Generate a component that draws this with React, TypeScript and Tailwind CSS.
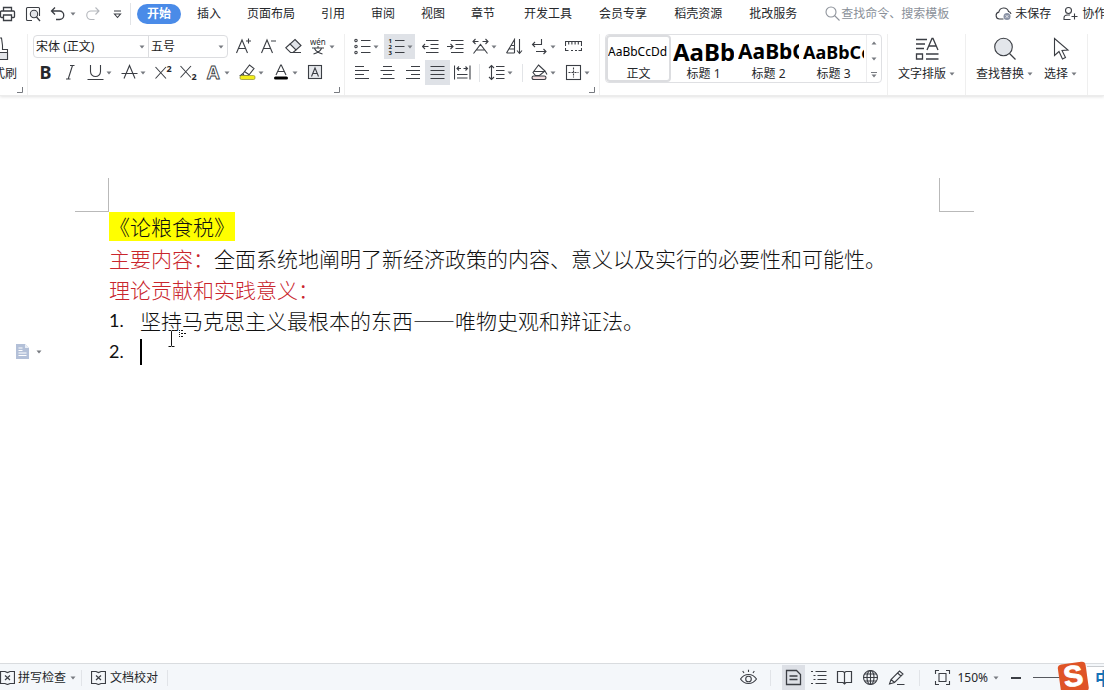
import React from "react";

const UI_FONT = "font-['Noto_Sans','Noto_Sans_CJK_SC',sans-serif]";
const DOC_FONT = "font-['Noto_Sans_CJK_SC',sans-serif]";

const coreTabs = ["插入", "页面布局", "引用", "审阅", "视图", "章节"];
const extraTabs = ["开发工具", "会员专享", "稻壳资源", "批改服务"];

const textStyles = [
  { label: "正文", sample: "AaBbCcDd", className: "text-[12px]" },
  { label: "标题 1", sample: "AaBb", className: "text-[24px] font-bold" },
  { label: "标题 2", sample: "AaBbC", className: "text-[21px] font-bold" },
  { label: "标题 3", sample: "AaBbCc", className: "text-[18px] font-bold" },
];

interface IconProps {
  size?: number;
  children: React.ReactNode;
}

const Icon: React.FC<IconProps> = ({ size = 17, children }) => (
  <svg
    width={size}
    height={size}
    viewBox={`0 0 ${size} ${size}`}
    fill="none"
    stroke="#3b3e44"
    strokeWidth="1.1"
    className="shrink-0"
    aria-hidden="true"
  >
    {children}
  </svg>
);

const Caret: React.FC<{ up?: boolean }> = ({ up }) => (
  <svg width="6" height="4" viewBox="0 0 6 4" className="shrink-0" aria-hidden="true">
    <path d={up ? "M.5 3.5h5L3 .5z" : "M.5 .5h5L3 3.5z"} fill="#777a80" />
  </svg>
);

interface ToolProps {
  title: string;
  menu?: boolean;
  active?: boolean;
  children: React.ReactNode;
}

/* Small ribbon button, with an arrow when it opens a menu */
const Tool: React.FC<ToolProps> = ({ title, menu, active, children }) => (
  <button
    title={title}
    aria-pressed={active}
    className={`flex h-[25px] shrink-0 items-center hover:bg-gray-100 ${
      menu ? "w-[31px] mr-[3px] pl-1 gap-0.5" : "w-[25px] justify-center"
    } ${active ? "bg-[#dfe2e7]" : ""}`}
  >
    <Icon>{children}</Icon>
    {menu && <Caret />}
  </button>
);

const BigTool: React.FC<{ label: string; icon: React.ReactNode; menu?: boolean }> = ({ label, icon, menu }) => (
  <button className="flex shrink-0 flex-col items-center gap-[5px] pt-[3px] text-[12px] leading-4 text-[#25272b]">
    {icon}
    <span className="flex items-center gap-[3px] whitespace-nowrap">
      {label}
      {menu && <Caret />}
    </span>
  </button>
);

const Group: React.FC<{ launcher?: string; className?: string; children: React.ReactNode }> = ({
  launcher,
  className = "",
  children,
}) => (
  <section className="flex shrink-0 flex-col border-r border-[#efefef]">
    <div className={`h-[51px] ${className}`}>{children}</div>
    {launcher && (
      <button title={launcher} className="mt-0.5 mr-1 self-end">
        <svg width="6" height="6" viewBox="0 0 6 6" fill="none" stroke="#777a80">
          <path d="M5.5 0v5.5H0" />
        </svg>
      </button>
    )}
  </section>
);

const Divider = () => <span className="mx-1 h-[18px] w-px shrink-0 bg-[#e2e4e7]" />;

const Picker: React.FC<{ label: string; value: string; className: string }> = ({ label, value, className }) => (
  <span className={`relative flex items-center ${className}`}>
    <select aria-label={label} className="h-full w-full appearance-none bg-transparent pl-0.5 text-[12px] text-[#222] outline-none">
      <option>{value}</option>
    </select>
    <span className="pointer-events-none absolute right-[3px] flex">
      <Caret />
    </span>
  </span>
);

const TitleBar = () => (
  <div className="flex h-[27px] items-center text-[12px] text-[#25272b]">
    <button title="打印">
      <Icon size={16}>
        <path d="M3.5 5V1.5h8V5M3.5 11.5H1.5a1 1 0 0 1-1-1V6a1 1 0 0 1 1-1h12a1 1 0 0 1 1 1v4.5a1 1 0 0 1-1 1h-2M3.5 9h8v5.5h-8z" strokeWidth="1.3" />
      </Icon>
    </button>
    <button title="打印预览" className="ml-[9px]">
      <Icon size={16}>
        <path d="M7 14.5H2.5a1 1 0 0 1-1-1v-11a1 1 0 0 1 1-1h11a1 1 0 0 1 1 1V10" />
        <circle cx="9" cy="8" r="3.7" fill="#e3e5e9" />
        <path d="m11.5 11 3.5 4" strokeWidth="1.4" />
      </Icon>
    </button>
    <button title="撤销" className="ml-[9px] flex items-center gap-1">
      <Icon size={16}>
        <path d="M5 1.5 1.5 5 5 8.5M2 5h7.5a4.2 4.2 0 0 1 0 8.5H6" strokeWidth="1.3" />
      </Icon>
      <Caret />
    </button>
    <button title="恢复" className="ml-[9px]" disabled>
      <Icon size={16}>
        <path d="M10.500 1.500 14 5l-3.500 3.500M13.500 5H6a4.200 4.200 0 0 0 0 8.500h3.500" stroke="#b4b7bc" />
      </Icon>
    </button>
    <button title="自定义快速访问工具栏" className="ml-[9px]">
      <Icon size={16}>
        <path d="M4 5h7M4.500 8h6l-3 3.500z" />
      </Icon>
    </button>
    <span className="ml-1 h-[22px] w-px shrink-0 bg-[#e2e4e7]" />

    <nav className="ml-1.5 flex shrink-0 items-center whitespace-nowrap">
      <button className="h-5 w-11 rounded-full bg-[#4a8be8] font-bold text-white">开始</button>
      <div className="ml-4 flex gap-[26px]">
        {coreTabs.map((tab) => (
          <button key={tab}>{tab}</button>
        ))}
      </div>
      <div className="ml-[29px] flex gap-[27px]">
        {extraTabs.map((tab) => (
          <button key={tab}>{tab}</button>
        ))}
      </div>
    </nav>

    <label className="ml-7 flex shrink-0 items-center gap-px">
      <Icon size={15}>
        <circle cx="6" cy="6" r="5" stroke="#8f949c" />
        <path d="m9.500 9.500 5 5" stroke="#8f949c" />
      </Icon>
      <input
        aria-label="查找"
        placeholder="查找命令、搜索模板"
        className="w-[120px] bg-transparent outline-none placeholder:text-[#8a9099]"
      />
    </label>

    <button className="ml-[34px] flex shrink-0 items-center gap-[3px]">
      <Icon size={17}>
        <path d="M8.500 14H4.500a3.500 3.500 0 0 1-.7-6.900 5 5 0 0 1 9.700-.6c1.300.4 2.200 1.200 2.500 2.500" />
        <circle cx="12" cy="11.500" r="3.500" fill="#8b93a5" stroke="none" />
        <path d="m10.700 10.200 2.600 2.600m0-2.600-2.600 2.600" stroke="#fff" strokeWidth=".8" />
      </Icon>
      未保存
    </button>
    <button className="ml-3 flex shrink-0 items-center gap-1">
      <Icon size={15}>
        <circle cx="5.500" cy="4.500" r="3" />
        <path d="M7.500 13.500H1V12c0-2 1.500-3 3.500-3H7M11.500 7.500v6M8.500 10.500h6" />
      </Icon>
      协作
    </button>
  </div>
);

const FontGroup = () => (
  <Group launcher="字体" className="flex flex-col gap-px pr-1 pl-[5px]">
    <div className="flex h-[25px] items-center">
      <div className="mr-[3px] flex h-[23px] rounded-sm border border-[#dcdde0]">
        <Picker label="字体" value="宋体 (正文)" className="w-[115px] border-r border-[#dcdde0]" />
        <Picker label="字号" value="五号" className="w-[78px]" />
      </div>
      <Tool title="增大字号">
        <path d="m1.500 15 5.500-13 5.500 13M3.500 10.500h7M13.500 .5v5M11 3h5" />
      </Tool>
      <Tool title="减小字号">
        <path d="m1.500 15 5.500-13 5.500 13M3.500 10.500h7M11 3h5" />
      </Tool>
      <Tool title="清除格式">
        <path d="m10 1.500 6 6-5 4.500-6-6z" fill="#e0e3e8" />
        <path d="M5 6 .8 9.800 5.500 14.500H8l3-2.500M5.500 14.500H16" />
      </Tool>
      <Tool title="拼音指南" menu>
        <text x="0" y="7" fontSize="8" fill="#2b2d31" stroke="none">wén</text>
        <path d="M2 10h12M8 8v2M4.500 10.500c1.500 3 4 4.500 8 5.500M11.500 10.500c-1.500 3-4 4.500-8 5.500" />
      </Tool>
    </div>
    <div className="flex h-[25px] items-center">
      <Tool title="加粗">
        <text x="2.500" y="15" fontSize="18" fontWeight="bold" fill="#26282c" stroke="none">B</text>
      </Tool>
      <Tool title="倾斜">
        <path d="M8 1.500h4.500M4 15h4.500M10.500 1.500 6.200 15" />
      </Tool>
      <Tool title="下划线" menu>
        <path d="M3.500 1v6.500a5 5 0 0 0 10 0V1M.5 15.500h16" />
      </Tool>
      <Tool title="删除线" menu>
        <path d="m3 14.500 5.500-13 5.500 13M.5 9.500h16" />
      </Tool>
      <Tool title="上标">
        <path d="m.5 3 10.500 11.500M11 3 .5 14.500" />
        <text x="11.500" y="7.500" fontSize="9" fontWeight="bold" fill="#26282c" stroke="none">2</text>
      </Tool>
      <Tool title="下标">
        <path d="m.5 2 10.500 11.500M11 2 .5 13.500" />
        <text x="11.500" y="16" fontSize="9" fontWeight="bold" fill="#26282c" stroke="none">2</text>
      </Tool>
      <Tool title="文字效果" menu>
        <text x="2" y="14.500" fontSize="18" fontWeight="bold" fill="#fff" strokeWidth=".9">A</text>
      </Tool>
      <Tool title="突出显示" menu>
        <path d="M4 9.500 10.500 1l4.500 3.500L9.500 11.500H5zM5.500 7.500l5 3.500M4 9.500l-2.500 2H5" />
        <rect x="1" y="11.500" width="15" height="4" rx="1.500" fill="#f3ee1b" stroke="#8c8b3a" strokeWidth=".7" />
      </Tool>
      <Tool title="字体颜色" menu>
        <path d="m3 11 4.700-10h.6L13 11M4.700 7.500h6.600" />
        <rect x="1" y="12.500" width="14" height="3" rx="1.500" fill="#000" stroke="none" />
      </Tool>
      <Tool title="字符底纹">
        <rect x="1.500" y="1.500" width="13" height="13" fill="#e6e8ec" />
        <path d="M4.500 12.500 8 4l3.500 8.500M5.500 9.500h5" />
      </Tool>
    </div>
  </Group>
);

const ParagraphGroup = () => (
  <Group launcher="段落" className="flex flex-col gap-px pr-1 pl-[5px]">
    <div className="flex h-[25px] items-center">
      <Tool title="项目符号" menu>
        <circle cx="2" cy="2.500" r="1.200" />
        <circle cx="2" cy="8.500" r="1.200" />
        <circle cx="2" cy="14.500" r="1.200" />
        <path d="M7 2.500h9.500M7 8.500h9.500M7 14.500h9.500" />
      </Tool>
      <Tool title="编号" menu active>
        <g fontSize="6" fontWeight="bold" fill="#222" stroke="none">
          <text x="0.500" y="4.500">1</text>
          <text x="0.500" y="10.700">2</text>
          <text x="0.500" y="16.700">3</text>
        </g>
        <path d="M7 2.500h9.500M7 8.500h9.500M7 14.500h9.500" />
      </Tool>
      <Tool title="减少缩进量">
        <path d="M4 2.500h12.500M8.500 6.500h8M8.500 10.500h8M4 14.500h12.500M.5 8.500h6M3 6 .5 8.500 3 11" />
      </Tool>
      <Tool title="增加缩进量">
        <path d="M4 2.500h12.500M8.500 6.500h8M8.500 10.500h8M4 14.500h12.500M0 8.500h6M3.500 6 6 8.500 3.500 11" />
      </Tool>
      <Tool title="中文版式" menu>
        <path d="M1 3.500h5.500M3.500 1 1 3.500 3.500 6M10.500 3.500H16M13.500 1 16 3.500 13.500 6M1.500 15.500l7-9 7 9M4.500 12h8" />
      </Tool>
      <Tool title="排序">
        <path d="M.5 15 8.500 1.500V15M3 11h5.500M.5 15h8M5 7.500h3.500M13.500 1v14.500M11 12.500l2.500 3 2.500-3" />
      </Tool>
      <Tool title="显示/隐藏段落标记" menu>
        <path d="M10.500 1v5.500H1.500M4 4 1.500 6.500 4 9M5 13.500h10M12.500 11l2.500 2.500-2.500 2.500" />
      </Tool>
      <Tool title="制表位">
        <path d="M.5 8V3.500h16V8M3.700 3.500v3M6.900 3.500v3M10.100 3.500v3M13.300 3.500v3" />
        <path d="M.5 10v2.500h3M6 12.500h2M10 12.500h2M13.500 12.500h3V10" />
      </Tool>
    </div>
    <div className="flex h-[25px] items-center">
      <Tool title="左对齐">
        <path d="M1 2.500h9M1 6.500h14M1 10.500h9M1 14.500h14" />
      </Tool>
      <Tool title="居中对齐">
        <path d="M4 2.500h9M1.500 6.500h14M4 10.500h9M1.500 14.500h14" />
      </Tool>
      <Tool title="右对齐">
        <path d="M7 2.500h9M2 6.500h14M7 10.500h9M2 14.500h14" />
      </Tool>
      <Tool title="两端对齐" active>
        <path d="M1.500 2.500h14M1.500 6.500h14M1.500 10.500h14M1.500 14.500h14" />
      </Tool>
      <Tool title="分散对齐">
        <path d="M.5 1.500v14M16 1.500v14M3 4.500h4M5 2.500l-2 2 2 2M9.500 4.500h4M11.500 2.500l2 2-2 2M3 10.500h10.500M3 14h10.500" />
      </Tool>
      <Divider />
      <Tool title="行距" menu>
        <path d="M3.500 1.500v14M1 4l2.500-2.500L6 4M1 13l2.500 2.500L6 13M8 2.500h8.500M8 6.500h8.500M8 10.500h8.500M8 14.500h8.500" />
      </Tool>
      <Divider />
      <Tool title="底纹颜色" menu>
        <path d="m7.500 1 6.500 6-5.500 4.500H4.500L2 8.500zM2.500 7.500H14M14 7l2 3.500" />
        <rect x="1" y="12" width="14" height="3.500" rx="1.700" fill="#f3dfe1" />
      </Tool>
      <Tool title="边框" menu>
        <rect x="1.500" y="1.500" width="14" height="14" />
        <path d="M8.500 3.500v10M3.500 8.500h10" strokeDasharray="2 1" />
      </Tool>
    </div>
  </Group>
);

const StyleGroup = () => (
  <Group className="px-[5px]">
    <div className="flex h-[49px] rounded-sm border border-[#dfe0e3]">
      {textStyles.map((style, index) => (
        <button
          key={style.label}
          className={`flex w-[65px] flex-col items-center overflow-hidden text-[#25272b] ${
            index === 0 ? "rounded-sm border-2 border-[#dcdde0]" : "border-2 border-transparent"
          }`}
        >
          <span
            className={`flex h-[29px] w-full shrink-0 items-center overflow-hidden leading-none whitespace-nowrap text-black ${style.className}`}
          >
            {style.sample}
          </span>
          <span className="text-[12px] leading-4">{style.label}</span>
        </button>
      ))}
      <div className="flex w-[15px] flex-col items-center justify-between border-l border-[#ececee] pt-1.5 pb-1">
        <button title="上一行" className="flex">
          <Caret up />
        </button>
        <button title="下一行" className="flex">
          <Caret />
        </button>
        <button title="更多样式" className="flex flex-col items-center gap-px">
          <span className="h-px w-1.5 bg-[#777a80]" />
          <Caret />
        </button>
      </div>
    </div>
  </Group>
);

const Ribbon = () => (
  <div className="flex h-[68px] pt-[7px]">
    <Group launcher="剪贴板" className="-ml-[19px] pr-[10px]">
      <BigTool
        label="格式刷"
        icon={
          <Icon size={24}>
            <path d="M4 22.500v-10h4.500v-4l1-7.500h5l1 7.500v4h5v10z" />
            <path d="M3.500 15.500h17v7h-17z" fill="#e3e5e9" />
          </Icon>
        }
      />
    </Group>
    <FontGroup />
    <ParagraphGroup />
    <StyleGroup />
    <Group className="px-[10px]">
      <BigTool
        label="文字排版"
        menu
        icon={
          <Icon size={24}>
            <path d="M1 2.500h11M1 7h9M1 11.500h8M1.500 17h6v5h-6zM11 17h12.500M11 22h12.500M12 13l5-11.500h1L23 13M13.500 9h8" strokeWidth="1.300" />
          </Icon>
        }
      />
    </Group>
    <Group className="flex items-start gap-[11px] px-[10px]">
      <BigTool
        label="查找替换"
        menu
        icon={
          <Icon size={24}>
            <circle cx="10.500" cy="10" r="8.800" fill="#e3e6eb" />
            <path d="m16.500 16.500 6 6" strokeWidth="1.300" />
          </Icon>
        }
      />
      <BigTool
        label="选择"
        menu
        icon={
          <Icon size={24}>
            <path d="M5.500 1.500v17l4.500-4 3.500 7.500 3-1.500-3.500-7 6-.5z" />
          </Icon>
        }
      />
    </Group>
  </div>
);

const Document = () => (
  <main className="min-h-0 flex-1 overflow-hidden bg-white pt-[82px] pr-[130px] pl-[75px]">
    {/* Page margin marks */}
    <div className="flex justify-between">
      <span className="h-[34px] w-[34px] border-r border-b border-[#b9b9b9]" />
      <span className="h-[34px] w-[35px] border-b border-l border-[#b9b9b9]" />
    </div>
    <article lang="zh-CN" className={`px-[34px] text-[21px] leading-[31px] font-light text-[#111] ${DOC_FONT}`}>
      <h1 className="flex h-[31px] items-start">
        <mark className="h-[29px] bg-[#ffff00] leading-[29px] text-[#111]">《论粮食税》</mark>
      </h1>
      <p className="whitespace-nowrap">
        <span className="text-[#c9252d]">主要内容：</span>
        全面系统地阐明了新经济政策的内容、意义以及实行的必要性和可能性。
      </p>
      <p className="text-[#c9252d]">理论贡献和实践意义：</p>
      <ol>
        <li className="relative flex">
          <span className="w-[31px] font-['Lato',sans-serif] text-[18px] font-normal">1.</span>
          坚持马克思主义最根本的东西——唯物史观和辩证法。
          {/* Mouse pointer with its list hint */}
          <svg className="absolute top-[24px] left-[58px]" width="22" height="20" fill="none" stroke="#111" aria-hidden="true">
            <path d="M1.500 1.500h2.500l.5 1 .5-1h2.500M4.500 2.500v14M1.500 17.500h2.500l.5-1 .5 1h2.500" />
            <path d="M12.500 1v7" strokeDasharray="1 1" />
            <path d="M14 1.500h3M14 4.500h6M14 7.500h3" strokeDasharray="2 1" />
          </svg>
        </li>
        <li className="relative flex h-[31px] items-center">
          <button title="段落布局" className="absolute -left-[93px] flex items-center gap-[7px]">
            <svg width="13" height="15" viewBox="0 0 13 15" fill="none">
              <path d="M0 0h9l4 4v11H0z" fill="#b3c0d8" />
              <path d="M9 0v4h4" fill="#e9eef6" />
              <path d="M2.500 4h4M2.500 6.500h4M2.500 9h8M2.500 11.500h8" stroke="#fff" strokeWidth="1.200" />
            </svg>
            <Caret />
          </button>
          <span className="w-[31px] font-['Lato',sans-serif] text-[18px] font-normal">2.</span>
          <span className="h-[26px] w-0.5 bg-black" />
        </li>
      </ol>
    </article>
  </main>
);

const ProofIcon = () => (
  <Icon size={15}>
    <path d="M5 1.500H.5v12H5l2.500 1 2.500-1h4.500v-12H10l-2.500 1z" strokeWidth="1.200" />
    <path d="m5 5.500 5 4.500M10 5.500 5 10" strokeWidth="1.200" />
  </Icon>
);

const StatusBar = () => (
  <footer className="relative flex h-[27px] shrink-0 items-center border-t border-[#d9dcdf] bg-[#f4f7fa] pt-px text-[12px] text-[#25272b]">
    <button className="flex items-center gap-[3px]">
      <ProofIcon />
      拼写检查
      <span className="ml-px flex">
        <Caret />
      </span>
    </button>
    <span className="ml-[5px] h-4 w-px bg-[#e1e4e8]" />
    <button className="ml-[9px] flex items-center gap-1">
      <ProofIcon />
      文档校对
    </button>
    <span className="ml-[9px] h-4 w-px bg-[#e1e4e8]" />

    <div className="ml-auto flex h-full shrink-0 items-center">
      <button title="护眼模式">
        <Icon>
          <path d="M.5 10c2-3 4.800-4.500 8-4.500s6 1.500 8 4.500c-2 3-4.800 4.500-8 4.500S2.500 13 .5 10zM8.500 3V.8M4 4 2.700 2M13 4l1.300-2" />
          <circle cx="8.500" cy="10" r="2.800" />
        </Icon>
      </button>
      <span className="mr-[11px] ml-[13px] h-4 w-px bg-[#e1e4e8]" />
      <button title="页面视图" className="flex h-full w-[23px] items-center justify-center bg-[#dde0e6]">
        <Icon>
          <path d="M1.500 1.500h10l4 4v10h-14zM4.500 7h8M4.500 10.500h8" strokeWidth="1.300" />
        </Icon>
      </button>
      <div className="ml-[5px] flex gap-[9px]">
        <button title="大纲">
          <Icon>
            <path d="M1 2.500h2M5.500 2.500h11M3.500 6.500h2M7.500 6.500h9M3.500 10.500h2M7.500 10.500h9M1 14.500h2M5.500 14.500h11" />
          </Icon>
        </button>
        <button title="阅读版式">
          <Icon>
            <path d="M1.500 2.500h5.500l1.500 1 1.500-1h5.500v11H10l-1.500 1.500L7 13.500H1.500zM8.500 3.500V15" strokeWidth="1.200" />
          </Icon>
        </button>
        <button title="Web版式">
          <Icon>
            <circle cx="8.500" cy="8.500" r="7" />
            <ellipse cx="8.500" cy="8.500" rx="3.500" ry="7" />
            <path d="M1.500 8.500h14M8.500 1.500v14M2.500 5h12M2.500 12h12" />
          </Icon>
        </button>
        <button title="写作模式">
          <Icon>
            <path d="M1.500 15 3 10.500 11.500 2l3.500 3-8.500 8.500zM3 10.500l3.500 3M9.500 4l3.500 3M9 15.500h7.500" />
          </Icon>
        </button>
      </div>
      <span className="mx-[14px] h-4 w-px bg-[#e1e4e8]" />
      <button title="最佳显示比例">
        <Icon>
          <path d="M1.500 5V1.500H5M12 1.500h3.500V5M15.500 12v3.500H12M5 15.500H1.500V12M5 4.500h7v8H5z" />
        </Icon>
      </button>
      <button className="ml-1.5 flex items-center gap-[5px] text-[12px]">
        150%
        <Caret />
      </button>
      <button title="缩小" className="ml-3 flex h-4 items-center">
        <span className="h-0.5 w-[10px] bg-[#3b3e44]" />
      </button>
      <input
        type="range"
        aria-label="显示比例"
        defaultValue={50}
        className="ml-3 h-px w-[71px] appearance-none bg-[#55585e]"
      />
    </div>

    {/* Input method bar floating over the corner */}
    <div className="absolute right-0 bottom-0 flex h-7 items-end">
      <svg width="32" height="29" viewBox="0 0 32 29" className="relative z-10 -mr-0.5 shrink-0">
        <g transform="rotate(-8 16 15)">
          <rect x="2" y="2" width="28" height="30" rx="4" fill="#df5426" />
          <text x="6.500" y="25" fontSize="29" fontWeight="bold" fill="#fff" stroke="#fff" className="font-['Liberation_Sans',sans-serif]">
            S
          </text>
        </g>
      </svg>
      <span className="flex h-6 w-[17px] items-center overflow-hidden border-t border-[#c9ccd0] bg-white pl-2 text-[17px] font-bold text-[#1673b8]">
        中
      </span>
    </div>
  </footer>
);

export default function App() {
  return (
    <div className={`flex h-screen min-w-0 flex-col overflow-hidden bg-white ${UI_FONT}`}>
      <header className="z-10 shrink-0 overflow-hidden border-b border-[#ececec] bg-white shadow-[0_1px_3px_rgba(0,0,0,0.12)]">
        <TitleBar />
        <Ribbon />
      </header>
      <Document />
      <StatusBar />
    </div>
  );
}
